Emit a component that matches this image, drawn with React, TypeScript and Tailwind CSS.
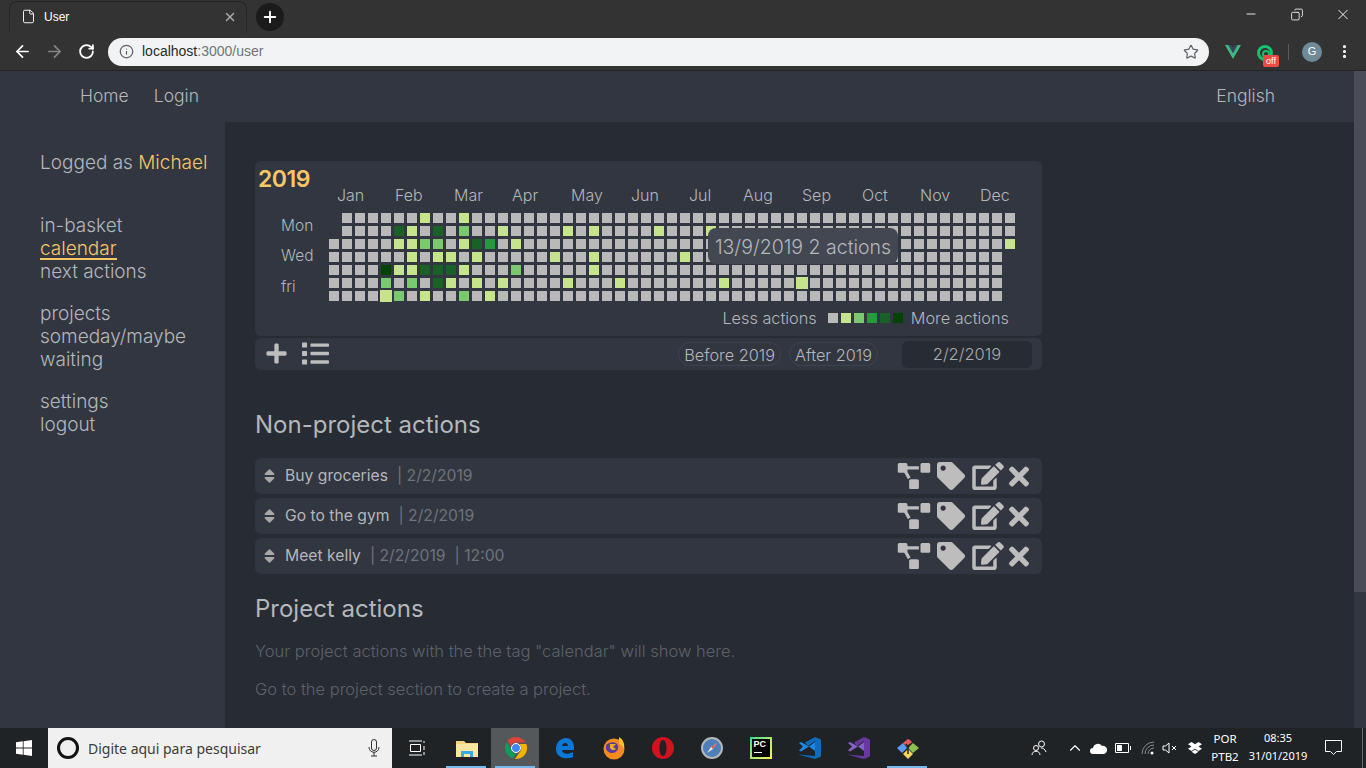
import type { ReactNode } from 'react';
import { FaEdit, FaList, FaPlus, FaProjectDiagram, FaSort, FaTag, FaTimes } from 'react-icons/fa';
import { ArrowLeft, ArrowRight, ChevronUp, Copy, File, Info, Minus, MoreVertical, Plus, RotateCw, Star, X } from 'lucide-react';

const MONTHS = ['Jan', 'Feb', 'Mar', 'Apr', 'May', 'Jun', 'Jul', 'Aug', 'Sep', 'Oct', 'Nov', 'Dec'];

const LEVELS = ['bg-[#b9b9b9]', 'bg-[#c6e48b]', 'bg-[#7bc96f]', 'bg-[#239a3b]', 'bg-[#196127]', 'bg-[#004400]'];

// "col,row": level
const ACTIVE: Record<string, number> = {
  '7,0': 1, '10,0': 1,
  '5,1': 4, '6,1': 1, '8,1': 4, '10,1': 2, '13,1': 1, '18,1': 1, '20,1': 1, '25,1': 1, '29,1': 1,
  '5,2': 1, '6,2': 1, '7,2': 2, '8,2': 2, '10,2': 1, '11,2': 4, '12,2': 3, '14,2': 1, '52,2': 1,
  '6,3': 1, '8,3': 1, '9,3': 1, '11,3': 1, '17,3': 1, '20,3': 1, '27,3': 1,
  '4,4': 5, '5,4': 1, '6,4': 1, '7,4': 4, '8,4': 4, '9,4': 4, '10,4': 1, '14,4': 2, '20,4': 1,
  '4,5': 2, '6,5': 2, '8,5': 4, '9,5': 1, '11,5': 1, '13,5': 1, '18,5': 1, '22,5': 1, '30,5': 1, '36,5': 1,
  '4,6': 1, '5,6': 2, '7,6': 1, '10,6': 2, '12,6': 1,
};

const BIG = ['4,6', '36,5'];

function Heatmap() {
  const cells = [];
  for (let col = 0; col < 53; col++) {
    for (let row = 0; row < 7; row++) {
      const key = `${col},${row}`;
      const hidden = (col === 0 && row < 2) || (col === 52 && row > 2);
      const big = BIG.includes(key);
      cells.push(
        <div
          key={key}
          className={`${big ? 'w-3 h-3 -m-px relative' : 'w-2.5 h-2.5'} ${hidden ? 'invisible' : LEVELS[ACTIVE[key] ?? 0]}`}
        />,
      );
    }
  }
  return <div className="grid grid-flow-col grid-rows-[repeat(7,10px)] auto-cols-[10px] gap-[3px]">{cells}</div>;
}

function ActionRow({ name, meta }: { name: string; meta: string[] }) {
  return (
    <div className="h-9 flex items-center rounded-md bg-[#323640] pl-[9px] pr-[13px] text-[15.7px]">
      <FaSort className="text-[#a8a8a8] w-[11px] h-[18px] mr-[10px]" />
      <span className="text-[#b4b6ba]">{name}</span>
      {meta.map((m) => (
        <span key={m} className="text-[#6f737b] ml-[9px]">
          | {m}
        </span>
      ))}
      <div className="ml-auto flex items-center text-[#bdbdbd]">
        <FaProjectDiagram className="w-[34px] h-[26px] mr-[6px]" />
        <FaTag className="text-[28px] mr-[7px]" />
        <FaEdit className="w-[32px] h-[28px] mr-[5px]" />
        <FaTimes className="w-[20px] h-[29px]" />
      </div>
    </div>
  );
}

function WindowsLogo() {
  return (
    <svg width="16" height="16" viewBox="0 0 16 16" fill="#fff">
      <path d="M0 2.3 6.8 1.3V7.6H0ZM7.6 1.2 16 0V7.6H7.6ZM0 8.4H6.8V14.7L0 13.7ZM7.6 8.4H16V16L7.6 14.8Z" />
    </svg>
  );
}

function TaskIcon({ active, open, children }: { active?: boolean; open?: boolean; children: ReactNode }) {
  return (
    <div className="relative w-[49px] h-10 flex items-center justify-center">
      {active && <div className="absolute inset-y-0 left-0 w-12 bg-[#54585b]" />}
      <div className="relative flex">{children}</div>
      {open && <div className="absolute bottom-0 left-[4px] w-10 h-[2px] bg-[#76b9ed]" />}
    </div>
  );
}

function TaskbarIcons() {
  return (
    <div className="flex items-center">
      <TaskIcon open>
        <svg width="22" height="18" viewBox="0 0 22 18">
          <path d="M0 2h8l2 2h12v14H0Z" fill="#f3d779" />
          <path d="M0 5h22v13H0Z" fill="#fbe7a1" />
          <path d="M5 12h12v6h-3v-3H8v3H5Z" fill="#38a9e4" />
        </svg>
      </TaskIcon>
      <TaskIcon active open>
        <svg width="24" height="24" viewBox="0 0 24 24">
          <path d="M12 1a11 11 0 0 1 9.6 5.5H12a5.5 5.5 0 0 0-5.2 3.7L3.5 4.8A11 11 0 0 1 12 1Z" fill="#db4437" />
          <path d="M2.8 6 7 13.500a5.500 5.500 0 0 0 5 4l-3 5A11 11 0 0 1 2.800 6Z" fill="#0f9d58" />
          <path d="M22.300 8H15a5.500 5.500 0 0 1 1.500 7L11 23a11 11 0 0 0 11.300-15Z" fill="#f4b400" />
          <circle cx="12" cy="12" r="4.500" fill="#4285f4" stroke="#fff" strokeWidth="1" />
        </svg>
      </TaskIcon>
      <TaskIcon>
        <svg width="20" height="22" viewBox="0 0 20 22">
          <path d="M1 12C1 6 5 1 11 1c5 0 8 4 8 10v2H7c0 4 6 5 11 2v5c-7 3-17 1-17-8Zm6-3h6c0-4-5-4-6 0Z" fill="#0a78d7" />
        </svg>
      </TaskIcon>
      <TaskIcon>
        <svg width="24" height="24" viewBox="0 0 24 24">
          <circle cx="12" cy="13" r="10.500" fill="#f58a1f" />
          <path d="M17 1c4 2 6 7 5 12-1-2-2-4-5-5Z" fill="#fbc02d" />
          <path d="M4 9c3-3 8-4 11-1 3 4 0 9-5 9-3 0-5-2-6-4Z" fill="#5b3a9e" />
          <path d="M8 8h6l-3 3 3 2c-2 2-5 1-6-1Z" fill="#f9a825" />
        </svg>
      </TaskIcon>
      <TaskIcon>
        <svg width="24" height="24" viewBox="0 0 24 24">
          <path fillRule="evenodd" d="M12 1a11 11 0 1 0 0 22 11 11 0 0 0 0-22Zm0 3c2.200 0 3.500 3.500 3.500 8s-1.300 8-3.500 8-3.500-3.500-3.500-8 1.300-8 3.500-8Z" fill="#d4121e" />
        </svg>
      </TaskIcon>
      <TaskIcon>
        <svg width="22" height="22" viewBox="0 0 22 22">
          <circle cx="11" cy="11" r="10" fill="#4d7fb8" stroke="#b5b8bb" strokeWidth="2" />
          <path d="M16 6 12 12 6 16l4-6Z" fill="#e8e8e8" />
          <path d="M16 6 12 12l-2-2Z" fill="#e05a4f" />
        </svg>
      </TaskIcon>
      <TaskIcon>
        <div className="w-[22px] h-[22px] bg-gradient-to-br from-[#21d789] to-[#fcf84a] p-[2px]">
          <div className="w-full h-full bg-black flex flex-col px-[2px] leading-none">
            <span className="text-white text-[9px] font-bold font-['Liberation_Sans',sans-serif] mt-px">PC</span>
            <div className="w-[8px] h-[1px] bg-white mt-[3px]" />
          </div>
        </div>
      </TaskIcon>
      <TaskIcon>
        <svg width="24" height="24" viewBox="0 0 24 24">
          <path d="M17 1 23 3.500V20.500L17 23 0 18.500 17 20Z" fill="#0f6cbd" />
          <path d="M17 6V15L11 10.500ZM1 7 3 6 11 10.500 3 15.500 1 14.500 5 10.500Z" fill="#1e88e5" />
          <path d="M7 6.500 17 1V5L10 10Z" fill="#0f6cbd" />
        </svg>
      </TaskIcon>
      <TaskIcon>
        <svg width="24" height="24" viewBox="0 0 24 24">
          <path d="M17 1 23 3.500V20.500L17 23 0 18.500 17 20Z" fill="#68389f" />
          <path d="M17 6V15L11 10.500ZM1 7 3 6 11 10.500 3 15.500 1 14.500 5 10.500Z" fill="#8661c5" />
          <path d="M7 6.500 17 1V5L10 10Z" fill="#68389f" />
        </svg>
      </TaskIcon>
      <TaskIcon open>
        <svg width="24" height="24" viewBox="0 0 24 24">
          <path d="M12 3 7 7l4 4 4-4 1-1-2-2Z" fill="#e55b5b" />
          <path d="M7 7 1 12l5 5 5-5Z" fill="#5b9cf0" />
          <path d="M17 7l6 5-6 5-5-5Z" fill="#8cc152" />
          <path d="M12 13l5 5-5 5-5-5Z" fill="#f6d55c" />
          <path d="M10 8l2 3v7M14 8l-2 3" stroke="#1f2225" strokeWidth="1.500" fill="none" />
        </svg>
      </TaskIcon>
    </div>
  );
}

export default function App() {
  return (
    <div className="h-screen w-full flex flex-col overflow-hidden font-['Inter',sans-serif] bg-[#272b33]">
      {/* browser tab strip */}
      <div className="h-[33px] shrink-0 bg-[#333333] flex items-end pl-[9px] relative">
        <div className="w-[238px] h-[32px] rounded-t-lg border border-b-0 border-[#252525] bg-[#333333] flex items-center pl-[11px] pr-[9px] pb-[2px] text-white text-[12px] font-['Liberation_Sans',sans-serif]">
          <File size={15} strokeWidth={1.5} className="mr-[8px]" />
          <span>User</span>
          <X size={14} strokeWidth={2.5} className="ml-auto text-[#a9a9a9]" />
        </div>
        <div className="w-7 h-7 rounded-full bg-[#1b1b1b] flex items-center justify-center ml-[9px] mb-[2px]">
          <Plus size={18} strokeWidth={2.5} className="text-white" />
        </div>
        <div className="ml-auto flex items-center text-white self-start h-[28px]">
          <Minus size={14} strokeWidth={1.5} className="w-[46px]" />
          <Copy size={13} strokeWidth={1.5} className="w-[46px] -scale-x-100" />
          <X size={17} strokeWidth={1.3} className="w-[46px]" />
        </div>
      </div>

      {/* toolbar */}
      <div className="h-[38px] shrink-0 bg-[#333333] border-b border-[#232323] flex items-center pl-[13px] pr-[11px]">
        <ArrowLeft size={19} strokeWidth={2.2} className="text-white" />
        <ArrowRight size={19} strokeWidth={2.2} className="text-[#858585] ml-[13px]" />
        <RotateCw size={17} strokeWidth={2.6} className="text-white ml-[14px]" />
        <div className="ml-[13px] w-[1101px] h-[28px] rounded-full bg-[#f1f3f4] flex items-center pl-[11px] pr-[10px] text-[14px] font-['Liberation_Sans',sans-serif]">
          <Info size={15} strokeWidth={2} className="text-[#5f6368]" />
          <span className="ml-[8px] text-[#2a2a2a]">localhost</span>
          <span className="text-[#70757a]">:3000/user</span>
          <Star size={16} strokeWidth={1.8} className="ml-auto text-[#5f6368]" />
        </div>
        <svg width="16" height="14" viewBox="0 0 16 14" className="ml-[16px]">
          <path d="M0 0h3.500L8 8 12.500 0H16L8 14Z" fill="#42b883" />
          <path d="M3.500 0h3L8 3 9.500 0h3L8 8Z" fill="#35495e" />
        </svg>
        <div className="relative w-[16px] h-[16px] ml-[16px] rounded-full border-[3px] border-[#15c26b] translate-y-px">
          <div className="absolute left-[2px] top-[2px] w-[8px] h-[8px] rounded-full border-2 border-[#15c26b]" />
          <div className="absolute left-[3px] top-[7px] w-4 h-3 bg-[#ee4b44] text-white text-[9px] leading-3 text-center rounded-[2px] font-['Liberation_Sans',sans-serif]">
            off
          </div>
        </div>
        <div className="w-px h-4 bg-[#5c5c5c] ml-[15px]" />
        <div className="w-5 h-5 rounded-full bg-[#6f8a99] ml-[13px] flex items-center justify-center text-white text-[11px] font-['Liberation_Sans',sans-serif]">
          G
        </div>
        <MoreVertical size={17} strokeWidth={2.5} className="text-white ml-[14px]" />
      </div>

      {/* page */}
      <div className="flex-1 min-h-0 flex">
        <div className="flex-1 min-w-0 flex flex-col">
          <header className="h-[51px] shrink-0 bg-[#323640] flex items-center pl-[80px] pr-[79px] text-[17.5px] font-light text-[#b4b7bb]">
            <a>Home</a>
            <a className="ml-[25px]">Login</a>
            <a className="ml-auto">English</a>
          </header>
          <div className="flex-1 min-h-0 flex">
            <aside className="w-[225px] shrink-0 bg-[#323640] pl-[40px] pt-[29px] text-[19px] font-light leading-[23px] text-[#b4b7bb]">
              <p>
                Logged as <span className="text-[#f7c766]">Michael</span>
              </p>
              <ul className="mt-[40px]">
                <li>in-basket</li>
                <li className="text-[#f7c766]">
                  <span className="border-b-2 border-[#f7c766] block w-fit leading-[18px] mt-[3px]">calendar</span>
                </li>
                <li>next actions</li>
              </ul>
              <ul className="mt-[19px]">
                <li>projects</li>
                <li>someday/maybe</li>
                <li>waiting</li>
              </ul>
              <ul className="mt-[19px]">
                <li>settings</li>
                <li>logout</li>
              </ul>
            </aside>

            <main className="flex-1 min-w-0 pl-[30px] pt-[39px] overflow-hidden">
              <div className="w-[787px]">
                {/* calendar card */}
                <section className="relative h-[175px] rounded-md bg-[#323640]">
                  <div className="flex h-[52px]">
                    <h2 className="w-[74px] pl-[3px] pt-[4px] text-[23px] leading-[29px] font-semibold text-[#f7c766] tracking-[-0.5px]">2019</h2>
                    <div className="grid grid-cols-[58px_59px_58px_59px_60px_58px_54px_59px_60px_58px_60px_auto] pt-[25px] text-[16px] leading-[18px] font-light text-[#b4b7bb] ml-[8px]">
                      {MONTHS.map((m) => (
                        <span key={m}>{m}</span>
                      ))}
                    </div>
                  </div>
                  <div className="flex">
                    <div className="w-[74px] pl-[26px] pt-[4px] text-[15.5px] font-light text-[#b4b7bb]">
                      <div className="leading-[18px]">Mon</div>
                      <div className="leading-[18px] mt-[12px]">Wed</div>
                      <div className="leading-[18px] mt-[13px]">fri</div>
                    </div>
                    <Heatmap />
                  </div>
                  <div className="absolute left-[453px] top-[67px] w-[190px] h-9 rounded-lg bg-[#434751] flex items-center justify-center pt-[3px] text-[19.5px] font-light text-[#b4b7bb] whitespace-nowrap">
                    13/9/2019 2 actions
                  </div>
                  <div className="absolute right-[33px] bottom-[9px] flex items-center text-[16.3px] leading-[18px] font-light text-[#b4b7bb]">
                    <span>Less actions</span>
                    <div className="flex gap-[3px] ml-[11px] mr-[8px]">
                      {LEVELS.map((c) => (
                        <div key={c} className={`w-2.5 h-2.5 ${c}`} />
                      ))}
                    </div>
                    <span>More actions</span>
                  </div>
                </section>

                {/* calendar controls */}
                <div className="mt-[2px] h-[32px] rounded-md bg-[#323640] flex items-center pl-[10px] pr-[10px] text-[#b4b7bb]">
                  <FaPlus className="text-[23px] text-[#bdbdbd] -mt-[2px]" />
                  <FaList className="text-[27px] ml-[14px] text-[#bdbdbd] -mt-[2px]" />
                  <button className="ml-auto h-[24px] rounded-full border border-[#3f434d] px-[5px] pb-[2px] text-[16.3px] font-light">Before 2019</button>
                  <button className="ml-[8px] h-[24px] rounded-full border border-[#3f434d] px-[5px] pb-[2px] text-[16.3px] font-light">After 2019</button>
                  <div className="ml-[24px] w-[130px] h-[27px] rounded-md bg-[#272b33] flex items-center justify-center text-[16.5px] font-light text-[#a9abae]">2/2/2019</div>
                </div>

                <h3 className="mt-[39px] text-[24px] leading-[32px] font-normal text-[#b4b7bb]">Non-project actions</h3>
                <div className="mt-[17px] flex flex-col gap-1">
                  <ActionRow name="Buy groceries" meta={['2/2/2019']} />
                  <ActionRow name="Go to the gym" meta={['2/2/2019']} />
                  <ActionRow name="Meet kelly" meta={['2/2/2019', '12:00']} />
                </div>

                <h3 className="mt-[19px] text-[24px] leading-[32px] font-normal text-[#b4b7bb]">Project actions</h3>
                <p className="mt-[15px] text-[16.5px] leading-[22px] font-light text-[#5e626a]">
                  Your project actions with the the tag "calendar" will show here.
                </p>
                <p className="mt-[16px] text-[16.5px] leading-[22px] font-light text-[#5e626a]">Go to the project section to create a project.</p>
              </div>
            </main>
          </div>
        </div>
        {/* scrollbar */}
        <div className="w-3 shrink-0 bg-[#323640]">
          <div className="h-[521px] bg-[#4a4d57]" />
        </div>
      </div>

      {/* windows taskbar */}
      <div className="h-10 shrink-0 bg-[#1f2326] flex items-center text-white font-['Noto_Sans',sans-serif]">
        <div className="w-12 flex justify-center">
          <WindowsLogo />
        </div>
        <div className="w-[344px] h-10 bg-[#f0f0f0] flex items-center pl-[9px] pr-[12px] text-[#3a3a3a] text-[14px]">
          <div className="w-[22px] h-[22px] rounded-full border-[3px] border-[#111]" />
          <span className="ml-[9px]">Digite aqui para pesquisar</span>
          <svg width="12" height="18" viewBox="0 0 12 18" fill="none" stroke="#333" className="ml-auto">
            <rect x="3.500" y="0.500" width="5" height="11" rx="2.500" />
            <path d="M1 8c0 7 10 7 10 0M6 13v4M3 17h6" />
          </svg>
        </div>
        <div className="w-[50px] flex justify-center">
          <svg width="16" height="16" viewBox="0 0 16 16" fill="none" stroke="#fff">
            <path d="M0 1h13M0 15h13M1.500 4.500h10v7h-10ZM15 1v2M15 6v4M15 12v3" />
          </svg>
        </div>
        <TaskbarIcons />
        <div className="ml-auto flex items-center h-10">
          <svg width="16" height="16" viewBox="0 0 16 16" fill="none" stroke="#fff" className="mr-[19px]">
            <circle cx="10.500" cy="4" r="3" />
            <circle cx="5" cy="8" r="2.500" />
            <path d="M1 15c0-5 8-5 8 0M10 8c2 0 4 1 5 4" />
          </svg>
          <ChevronUp size={18} strokeWidth={1.5} className="text-white mr-[6px]" />
          <svg width="17" height="11" viewBox="0 0 17 11" fill="#fff" className="mr-[8px]">
            <path d="M3 11a3 3 0 0 1 0-6 5 5 0 0 1 9-2 4 4 0 0 1 2 8Z" />
          </svg>
          <svg width="16" height="10" viewBox="0 0 16 10" fill="none" stroke="#fff" className="mr-[10px]">
            <path d="M0.500 0.500h13v9h-13ZM15.500 3v4" />
            <rect x="2" y="2" width="5" height="6" fill="#fff" stroke="none" />
          </svg>
          <svg width="14" height="14" viewBox="0 0 14 14" fill="none" stroke="#8c8c8c" className="mr-[7px]">
            <path d="M1 13A12 12 0 0 1 13 1M4 13a9 9 0 0 1 9-9M7 13a6 6 0 0 1 6-6" />
            <circle cx="11" cy="12" r="1.500" fill="#fff" stroke="none" />
          </svg>
          <svg width="16" height="12" viewBox="0 0 16 12" fill="none" stroke="#fff" className="mr-[10px]">
            <path d="M1 4h2.500L7 1v10L3.500 8H1ZM10 4l4 4M14 4l-4 4" />
          </svg>
          <svg width="14" height="12" viewBox="0 0 14 12" fill="#fff" className="mr-[4px]">
            <path d="M3.500 0 7 2.200 10.500 0 14 2.300 10.500 4.500 14 6.800 10.500 9 7 6.800 3.500 9 0 6.800 3.500 4.500 0 2.300ZM3.500 9.800 7 7.700l3.500 2.100L7 12Z" />
          </svg>
          <div className="w-[38px] text-center text-[11.5px] leading-[18px] -mt-px">
            <div>POR</div>
            <div>PTB2</div>
          </div>
          <div className="w-[70px] text-center text-[11px] leading-[18px] -ml-px -mt-[3px]">
            <div>08:35</div>
            <div>31/01/2019</div>
          </div>
          <div className="w-[40px] flex justify-center mr-[9px]">
            <svg width="17" height="16" viewBox="0 0 17 16" fill="none" stroke="#fff">
              <path d="M0.500 0.500h16v11h-5l-3 3-3-3h-5Z" />
            </svg>
          </div>
          <div className="w-px h-10 bg-[#6b6b6b]" />
          <div className="w-[3px]" />
        </div>
      </div>
    </div>
  );
}
